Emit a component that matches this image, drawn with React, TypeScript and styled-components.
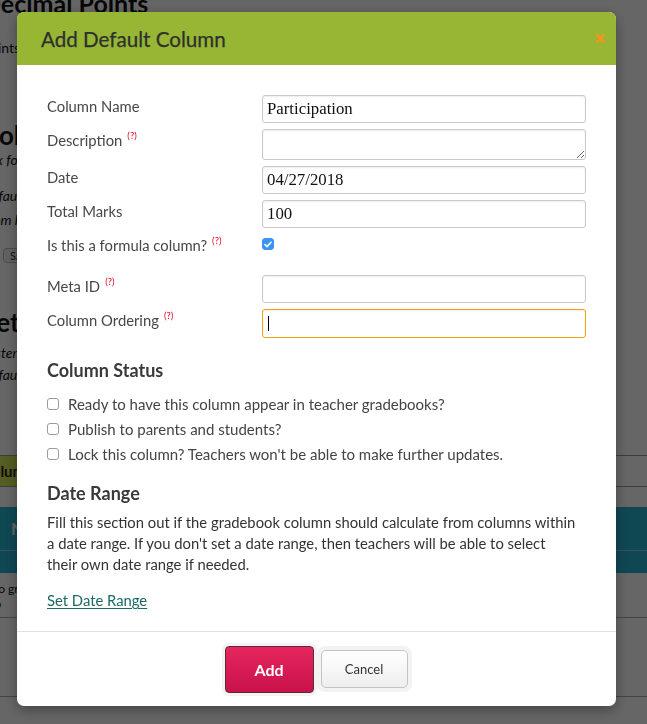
import React from "react";
import styled, { createGlobalStyle } from "styled-components";

const GlobalStyle = createGlobalStyle`
  html, body {
    margin: 0;
    padding: 0;
    width: 647px;
    height: 724px;
    overflow: hidden;
    background: #ffffff;
  }
  body {
    font-family: Lato, "Open Sans", "Liberation Sans", sans-serif;
    -webkit-font-smoothing: antialiased;
  }
  * { box-sizing: border-box; }
`;

const UI_FONT = `Lato, "Open Sans", "Liberation Sans", sans-serif`;

/* ---------- settings page behind the dialog ---------- */

const Page = styled.div`
  width: 647px;
  height: 724px;
  overflow: hidden;
  background: #ffffff;
  color: #111;
  font-family: ${UI_FONT};
`;

const PageColumn = styled.div`
  margin-left: -18px;
  width: 700px;
  display: flex;
  flex-direction: column;
`;

const PageTitle = styled.h1`
  margin: -12px 0 0;
  font-size: 25px;
  line-height: 30px;
  font-weight: 700;
`;

const Lead = styled.p`
  margin: 20px 0 0;
  font-size: 14px;
  line-height: 20px;
`;

const SectionTitle = styled.h2<{ $top: number }>`
  margin: ${(p) => p.$top}px 0 0;
  font-size: 26px;
  line-height: 28px;
  font-weight: 700;
`;

const Hint = styled.p<{ $top: number; $lh: number }>`
  margin: ${(p) => p.$top}px 0 0;
  font-size: 14px;
  line-height: ${(p) => p.$lh}px;
  font-style: italic;
  white-space: nowrap;
`;

const SmallButton = styled.button`
  align-self: flex-start;
  margin: 16px 0 0 21px;
  height: 15px;
  padding: 0 6px;
  border: 1px solid #bbb;
  border-radius: 4px;
  background: #f4f4f4;
  font: 11px/13px ${UI_FONT};
  color: #333;
`;

const Toolbar = styled.div`
  margin-top: 69px;
  height: 32px;
  border-top: 1px solid #999;
  border-bottom: 1px solid #999;
  display: flex;
  align-items: stretch;
`;

const OliveButton = styled.div`
  width: 110px;
  background: #d4e85a;
  color: #222;
  font-size: 15px;
  font-weight: 700;
  display: flex;
  align-items: center;
  padding-left: 0;
`;

const TableHead = styled.div`
  margin-top: 20px;
  background: #27b4cf;
  color: #fff;
  display: flex;
  flex-direction: column;
`;

const HeadRow = styled.div<{ $h: number }>`
  height: ${(p) => p.$h}px;
  display: flex;
  align-items: center;
  padding-left: 29px;
  font-size: 17px;
  font-weight: 700;
  & + & { border-top: 1px solid #7fd3e3; }
`;

const BodyRow = styled.div<{ $h: number }>`
  height: ${(p) => p.$h}px;
  border-bottom: 1px solid #aaa;
  padding: 8px 0 0 0;
  font-size: 12px;
  line-height: 15px;
`;

/* ---------- dialog ---------- */

const Overlay = styled.div`
  position: fixed;
  inset: 0;
  background: rgba(0, 0, 0, 0.6);
  padding: 12px 0 0 17px;
`;

const Dialog = styled.div`
  width: 599px;
  background: #fff;
  border-radius: 7px;
  overflow: hidden;
  box-shadow: 0 4px 14px rgba(0, 0, 0, 0.35);
  display: flex;
  flex-direction: column;
  font-family: ${UI_FONT};
`;

const Header = styled.div`
  height: 53px;
  background: #96b634;
  display: flex;
  align-items: center;
  justify-content: space-between;
  padding: 0 11px 0 24px;
`;

const Title = styled.h3`
  margin: 0;
  font-size: 20.6px;
  font-weight: 400;
  color: #2f2f2f;
  -webkit-text-stroke: 0.25px #2f2f2f;
`;

const CloseButton = styled.button`
  border: 0;
  padding: 0;
  background: none;
  width: 9px;
  height: 9px;
  display: flex;
`;

const Body = styled.div`
  padding: 30px 30px 20px;
  display: flex;
  flex-direction: column;
`;

const Fields = styled.div`
  display: flex;
  flex-direction: column;
  gap: 6px;
`;

const FieldRow = styled.div<{ $h: number }>`
  height: ${(p) => p.$h}px;
  display: grid;
  grid-template-columns: 215px 1fr;
  align-items: start;
`;

const Label = styled.label`
  padding-top: 1px;
  font-size: 14.8px;
  line-height: 20px;
  color: #474747;
`;

const Help = styled.sup`
  margin-left: 5px;
  font-size: 9.5px;
  line-height: 0;
  color: #e3061f;
  vertical-align: 7px;
`;

const fieldBox = `
  width: 100%;
  border: 1px solid #c9c9c9;
  border-radius: 3px;
  box-shadow: inset 0 1px 2px rgba(0, 0, 0, 0.07);
  padding: 0 4px;
  font-family: Georgia, "Liberation Serif", "DejaVu Serif", serif;
  font-size: 16.8px;
  color: #111;
  background: #fff;
  outline: none;
`;

const TextInput = styled.input<{ $focused?: boolean }>`
  ${fieldBox}
  height: 100%;
  caret-color: transparent;
  border-color: ${(p) => (p.$focused ? "#f5a20f" : "#c9c9c9")};
`;

const TextArea = styled.textarea`
  ${fieldBox}
  height: 100%;
  resize: vertical;
  padding-top: 4px;
`;

const InputWrap = styled.div`
  position: relative;
  height: 100%;
`;

const Caret = styled.span`
  position: absolute;
  left: 6px;
  top: 7px;
  width: 1px;
  height: 15px;
  background: #000;
`;

const CheckBox = styled.span<{ $checked?: boolean; $mt?: number }>`
  display: inline-flex;
  align-items: center;
  justify-content: center;
  flex: none;
  width: 12px;
  height: 12px;
  margin-top: ${(p) => p.$mt ?? 0}px;
  border-radius: 3px;
  border: 1px solid ${(p) => (p.$checked ? "#3a94f6" : "#9b9b9b")};
  background: ${(p) => (p.$checked ? "#3a94f6" : "#fff")};
`;

const SectionHeading = styled.h4<{ $top: number }>`
  margin: ${(p) => p.$top}px 0 0;
  font-size: 18px;
  line-height: 22px;
  font-weight: 700;
  color: #3a3a3a;
`;

const StatusList = styled.div`
  margin-top: 10px;
  display: flex;
  flex-direction: column;
`;

const StatusItem = styled.label`
  height: 25px;
  display: flex;
  align-items: center;
  gap: 9px;
  font-size: 15px;
  color: #444;
`;

const Paragraph = styled.p`
  margin: 8px 0 0;
  font-size: 14.8px;
  line-height: 21px;
  color: #333;
`;

const TextLink = styled.a`
  margin-top: 15px;
  align-self: flex-start;
  font-size: 14.8px;
  line-height: 21px;
  color: #1b6a63;
  text-decoration: underline;
  text-underline-offset: 2px;
`;

const Footer = styled.div`
  height: 75px;
  border-top: 1px solid #e2e2e2;
  display: flex;
  align-items: center;
  justify-content: center;
`;

const Halo = styled.div<{ $pad: number }>`
  padding: ${(p) => p.$pad}px;
  border-radius: ${(p) => p.$pad + 4}px;
  background: #f3f3f3;
  display: flex;
`;

const PrimaryButton = styled.button`
  width: 89px;
  height: 47px;
  border: 1px solid #5c2b3a;
  border-radius: 4px;
  background: linear-gradient(#e6275f, #c8114b);
  color: #fff;
  font: 700 16px ${UI_FONT};
`;

const SecondaryButton = styled.button`
  width: 87px;
  height: 38px;
  border: 1px solid #c4c4c4;
  border-radius: 5px;
  background: linear-gradient(#ffffff, #eeeeee);
  color: #333;
  font: 400 13px ${UI_FONT};
`;

const Check = () => (
  <svg width="8" height="7" viewBox="0 0 8 7">
    <path d="M1 3.6 L3.1 5.6 L7 1.2" fill="none" stroke="#fff" strokeWidth="1.6" strokeLinecap="round" strokeLinejoin="round" />
  </svg>
);

const CloseIcon = () => (
  <svg width="9" height="9" viewBox="0 0 9 9">
    <path d="M1.2 1.2 L7.8 7.8 M7.8 1.2 L1.2 7.8" stroke="#f7931e" strokeWidth="2.6" strokeLinecap="round" />
  </svg>
);

type Field = { label: string; help?: boolean; h: number; kind: "text" | "area" | "check" | "focus"; value?: string };

const fields: Field[] = [
  { label: "Column Name", h: 28, kind: "text", value: "Participation" },
  { label: "Description", help: true, h: 31, kind: "area" },
  { label: "Date", h: 28, kind: "text", value: "04/27/2018" },
  { label: "Total Marks", h: 28, kind: "text", value: "100" },
  { label: "Is this a formula column?", help: true, h: 35, kind: "check" },
  { label: "Meta ID", help: true, h: 28, kind: "text", value: "" },
  { label: "Column Ordering", help: true, h: 29, kind: "focus" },
];

const statuses = [
  "Ready to have this column appear in teacher gradebooks?",
  "Publish to parents and students?",
  "Lock this column? Teachers won't be able to make further updates.",
];

function renderControl(f: Field) {
  switch (f.kind) {
    case "area":
      return <TextArea />;
    case "check":
      return (
        <CheckBox $checked $mt={4}>
          <Check />
        </CheckBox>
      );
    case "focus":
      return (
        <InputWrap>
          <TextInput $focused defaultValue="" />
          <Caret />
        </InputWrap>
      );
    default:
      return <TextInput defaultValue={f.value} />;
  }
}

export default function App() {
  return (
    <>
      <GlobalStyle />
      <Page>
        <PageColumn>
          <PageTitle>Decimal Points</PageTitle>
          <Lead>Points are rounded to the number of decimal places chosen above.</Lead>
          <SectionTitle $top={63}>Column Options</SectionTitle>
          <Hint $top={1} $lh={20}>
            box for each default column that should be created in every teacher gradebook, with the comments enabled
          </Hint>
          <Hint $top={14} $lh={24}>
            Default columns are added automatically to each new gradebook.
            <br />
            From here you can change their names and totals.
          </Hint>
          <SmallButton>Save</SmallButton>
          <SectionTitle $top={45}>Settings</SectionTitle>
          <Hint $top={6} $lh={22}>
            System defaults are applied to every gradebook in the school, which is helpful for reporting
            <br />
            Defaults can be overridden per course and will show on the report card
          </Hint>
          <Toolbar>
            <OliveButton>Columns</OliveButton>
          </Toolbar>
          <TableHead>
            <HeadRow $h={43}>Name</HeadRow>
            <HeadRow $h={23} />
          </TableHead>
          <BodyRow $h={45}>
            Also group
            <br />
            Top
          </BodyRow>
          <BodyRow $h={79} />
        </PageColumn>
      </Page>

      <Overlay>
        <Dialog role="dialog" aria-label="Add Default Column">
          <Header>
            <Title>Add Default Column</Title>
            <CloseButton aria-label="Close">
              <CloseIcon />
            </CloseButton>
          </Header>
          <Body>
            <Fields>
              {fields.map((f) => (
                <FieldRow key={f.label} $h={f.h}>
                  <Label>
                    {f.label}
                    {f.help && <Help>(?)</Help>}
                  </Label>
                  {renderControl(f)}
                </FieldRow>
              ))}
            </Fields>

            <SectionHeading $top={21}>Column Status</SectionHeading>
            <StatusList>
              {statuses.map((s) => (
                <StatusItem key={s}>
                  <CheckBox />
                  {s}
                </StatusItem>
              ))}
            </StatusList>

            <SectionHeading $top={16}>Date Range</SectionHeading>
            <Paragraph>
              Fill this section out if the gradebook column should calculate from columns within
              <br />
              a date range. If you don't set a date range, then teachers will be able to select
              <br />
              their own date range if needed.
            </Paragraph>
            <TextLink href="#">Set Date Range</TextLink>
          </Body>
          <Footer>
            <Halo $pad={3}>
              <PrimaryButton>Add</PrimaryButton>
            </Halo>
            <Halo $pad={4}>
              <SecondaryButton>Cancel</SecondaryButton>
            </Halo>
          </Footer>
        </Dialog>
      </Overlay>
    </>
  );
}
